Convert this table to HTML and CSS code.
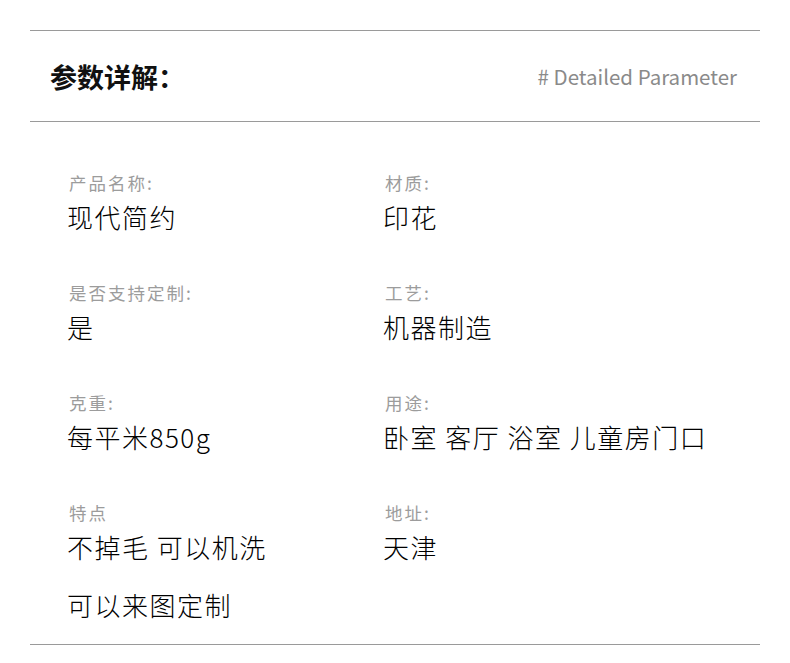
FILE: index.html
```html
<!DOCTYPE html>
<html lang="zh-CN">
<head>
<meta charset="utf-8">
<title>参数详解</title>
<link rel="stylesheet" href="styles.css">
</head>
<body>
<div class="sheet">
  <header class="head">
    <h1 class="title">参数详解：</h1>
    <span class="sub"># Detailed Parameter</span>
  </header>
  <div class="params">
    <div class="item"><div class="label">产品名称:</div><div class="value">现代简约</div></div>
    <div class="item"><div class="label">材质:</div><div class="value">印花</div></div>
    <div class="item"><div class="label">是否支持定制:</div><div class="value">是</div></div>
    <div class="item"><div class="label">工艺:</div><div class="value">机器制造</div></div>
    <div class="item"><div class="label">克重:</div><div class="value">每平米850g</div></div>
    <div class="item"><div class="label">用途:</div><div class="value">卧室 客厅 浴室 儿童房门口</div></div>
    <div class="item"><div class="label">特点</div><div class="value">不掉毛 可以机洗</div><div class="value extra">可以来图定制</div></div>
    <div class="item"><div class="label">地址:</div><div class="value">天津</div></div>
  </div>
</div>
</body>
</html>
```

FILE: styles.css
```css
html, body {
  margin: 0;
  padding: 0;
  background: #fff;
}
body {
  font-family: "Noto Sans CJK SC", "Noto Sans", sans-serif;
  padding-top: 30px;
}
.sheet {
  margin: 0 30px;
  border-top: 1px solid #9a9a9a;
  border-bottom: 1px solid #9a9a9a;
}
.head {
  height: 90px;
  border-bottom: 1px solid #9a9a9a;
  display: flex;
  align-items: center;
  justify-content: space-between;
  padding: 0 23px 0 20px;
}
.title {
  margin: 0;
  font-size: 27px;
  font-weight: 700;
  color: #111;
  line-height: 1;
}
.sub {
  font-size: 20.5px;
  color: #8a8a8a;
  line-height: 1;
}
.params {
  display: grid;
  grid-template-columns: 316px 1fr;
  row-gap: 48px;
  padding: 51px 0 21px 37px;
}
.label {
  font-size: 17.5px;
  line-height: 20px;
  color: #9c9c9c;
  padding-left: 2px;
  letter-spacing: 2px;
}
.value {
  font-size: 26px;
  line-height: 36px;
  color: #000;
  margin-top: 6px;
  letter-spacing: 1.5px;
  font-weight: 300;
}
.value.extra {
  margin-top: 22px;
}
```
